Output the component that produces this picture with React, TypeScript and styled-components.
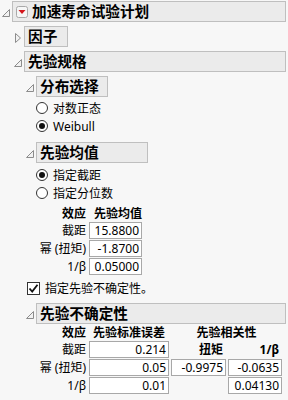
import React from 'react';
import styled, { createGlobalStyle } from 'styled-components';

const GlobalStyle = createGlobalStyle`
  html, body {
    margin: 0;
    padding: 0;
    background: #f7f7f7;
  }
  body {
    font-family: "Noto Sans", "Noto Sans CJK SC", sans-serif;
    font-size: 12px;
    color: #000;
  }
`;

const Page = styled.div`
  width: 288px;
  height: 400px;
  overflow: hidden;
  box-sizing: border-box;
  padding: 1px 2px 0 0;
`;

const Node = styled.div<{ $mt?: number }>`
  display: flex;
  flex-direction: column;
  margin-top: ${p => p.$mt ?? 0}px;
`;

const HeadRow = styled.div`
  display: flex;
  align-items: center;
  height: 21px;
`;

const Toggle = styled.div`
  width: 12px;
  height: 21px;
  flex: none;
  display: flex;
  align-items: center;
  justify-content: center;
  padding-top: 2px;
  box-sizing: border-box;
`;

const TitleBox = styled.div<{ $w?: number }>`
  box-sizing: border-box;
  height: 21px;
  ${p => (p.$w ? `width: ${p.$w}px;` : 'flex: 1;')}
  background: #ebebeb;
  border: 1px solid #bfbfbf;
  display: flex;
  align-items: center;
  gap: 4px;
  padding-left: 3px;
  font-family: "Noto Sans CJK SC", sans-serif;
  font-weight: 700;
  font-size: 14.67px;
  line-height: 1;
  white-space: nowrap;
`;

const Children = styled.div`
  display: flex;
  flex-direction: column;
  padding-left: 12px;
`;

const RadioGroup = styled.div<{ $mt: number }>`
  display: flex;
  flex-direction: column;
  margin-top: ${p => p.$mt}px;
`;

const OptionRow = styled.div`
  display: flex;
  align-items: center;
  gap: 5px;
  height: 18px;
  white-space: nowrap;
`;

const RadioDot = styled.span<{ $on?: boolean }>`
  width: 12px;
  height: 12px;
  box-sizing: border-box;
  border: 1px solid #333;
  border-radius: 50%;
  background: #fff;
  display: flex;
  align-items: center;
  justify-content: center;
  &::after {
    content: '';
    width: 6px;
    height: 6px;
    border-radius: 50%;
    background: ${p => (p.$on ? '#111' : 'transparent')};
  }
`;

const CheckRow = styled(OptionRow)`
  margin: 4px 0 0 3px;
  height: 16px;
`;

const CheckBox = styled.span`
  width: 13px;
  height: 13px;
  box-sizing: border-box;
  border: 1px solid #333;
  background: #fff;
  display: flex;
  align-items: center;
  justify-content: center;
`;

const Table = styled.div<{ $cols: string; $gap: number; $mt: number }>`
  display: grid;
  grid-template-columns: ${p => p.$cols};
  grid-template-rows: 17px repeat(3, 18px);
  column-gap: ${p => p.$gap}px;
  margin-top: ${p => p.$mt}px;
  line-height: 17px;
  white-space: nowrap;
`;

const Label = styled.div<{ $bold?: boolean }>`
  text-align: right;
  font-weight: ${p => (p.$bold ? 700 : 400)};
`;

const HeadCell = styled.div<{ $align?: string; $pad?: number; $span?: number }>`
  font-weight: 700;
  text-align: ${p => p.$align ?? 'center'};
  padding-right: ${p => p.$pad ?? 0}px;
  ${p => (p.$span ? `grid-column: span ${p.$span};` : '')}
`;

const ValueBox = styled.div`
  box-sizing: border-box;
  height: 17px;
  border: 1px solid #a8a8a8;
  background: #fff;
  text-align: right;
  padding-right: 2px;
  line-height: 15px;
`;

const Empty = styled.div``;

const OpenTri = () => (
  <svg width="8" height="8" viewBox="0 0 8 8">
    <polygon points="7.5,0.5 7.5,7.5 0.5,7.5" fill="#f2f2f2" stroke="#8c8c8c" strokeWidth="1" />
  </svg>
);

const ClosedTri = () => (
  <svg width="6" height="10" viewBox="0 0 6 10">
    <polygon points="0.5,0.5 5.5,5 0.5,9.5" fill="#f2f2f2" stroke="#8c8c8c" strokeWidth="1" />
  </svg>
);

const RedMenu = () => (
  <svg width="12" height="12" viewBox="0 0 12 12">
    <rect x="0.5" y="0.5" width="11" height="11" rx="2" fill="#f6f6f6" stroke="#a9a9a9" />
    <polygon points="2.5,4 9.5,4 6,8" fill="#d4161c" />
  </svg>
);

const Outline: React.FC<{
  title: string;
  open?: boolean;
  w?: number;
  mt?: number;
  menu?: boolean;
  children?: React.ReactNode;
}> = ({ title, open = true, w, mt, menu, children }) => (
  <Node $mt={mt}>
    <HeadRow>
      <Toggle>{open ? <OpenTri /> : <ClosedTri />}</Toggle>
      <TitleBox $w={w}>
        {menu && <RedMenu />}
        {title}
      </TitleBox>
    </HeadRow>
    {open && children && <Children>{children}</Children>}
  </Node>
);

const Radio: React.FC<{ on?: boolean; text: string }> = ({ on, text }) => (
  <OptionRow>
    <RadioDot $on={on} />
    {text}
  </OptionRow>
);

export default function App() {
  return (
    <Page>
      <GlobalStyle />
      <Outline title="加速寿命试验计划" menu>
        <Outline title="因子" open={false} w={44} mt={4} />
        <Outline title="先验规格" mt={4}>
          <Outline title="分布选择" w={72} mt={4}>
            <RadioGroup $mt={2}>
              <Radio text="对数正态" />
              <Radio on text="Weibull" />
            </RadioGroup>
          </Outline>
          <Outline title="先验均值" w={112} mt={7}>
            <RadioGroup $mt={3}>
              <Radio on text="指定截距" />
              <Radio text="指定分位数" />
            </RadioGroup>
            <Table $cols="50px 53px" $gap={3} $mt={3}>
              <Label $bold>效应</Label>
              <HeadCell $align="right">先验均值</HeadCell>
              <Label>截距</Label>
              <ValueBox>15.8800</ValueBox>
              <Label>幂 (扭矩)</Label>
              <ValueBox>-1.8700</ValueBox>
              <Label>1/β</Label>
              <ValueBox>0.05000</ValueBox>
            </Table>
          </Outline>
          <CheckRow>
            <CheckBox>
              <svg width="11" height="11" viewBox="0 0 11 11">
                <path d="M1.5 5.5 L4.2 8.5 L9.5 1.8" fill="none" stroke="#111" strokeWidth="1.8" />
              </svg>
            </CheckBox>
            指定先验不确定性。
          </CheckRow>
          <Outline title="先验不确定性" mt={7}>
            <Table $cols="50px 3px 80px 2px 55px 2px 54px" $gap={0} $mt={0}>
              <Label $bold>效应</Label>
              <Empty />
              <HeadCell>先验标准误差</HeadCell>
              <Empty />
              <HeadCell $span={3}>先验相关性</HeadCell>

              <Label>截距</Label>
              <Empty />
              <ValueBox>0.214</ValueBox>
              <Empty />
              <HeadCell $align="right" $pad={3}>扭矩</HeadCell>
              <Empty />
              <HeadCell $align="right" $pad={3}>1/β</HeadCell>

              <Label>幂 (扭矩)</Label>
              <Empty />
              <ValueBox>0.05</ValueBox>
              <Empty />
              <ValueBox>-0.9975</ValueBox>
              <Empty />
              <ValueBox>-0.0635</ValueBox>

              <Label>1/β</Label>
              <Empty />
              <ValueBox>0.01</ValueBox>
              <Empty />
              <Empty />
              <Empty />
              <ValueBox>0.04130</ValueBox>
            </Table>
          </Outline>
        </Outline>
      </Outline>
    </Page>
  );
}
